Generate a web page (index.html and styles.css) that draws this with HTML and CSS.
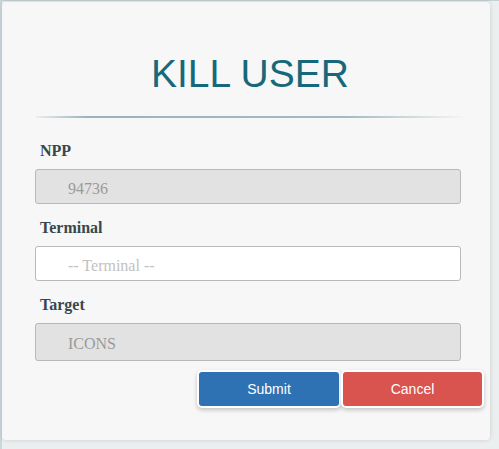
FILE: index.html
```html
<!DOCTYPE html>
<html>
<head>
<meta charset="utf-8">
<link rel="stylesheet" href="styles.css">
</head>
<body>
<div class="page">
  <div class="card">
    <h1 class="title">KILL USER</h1>
    <div class="rule"></div>
    <form class="form">
      <label class="label">NPP</label>
      <input class="input readonly" type="text" value="94736" readonly>
      <label class="label">Terminal</label>
      <input class="input" type="text" placeholder="-- Terminal --">
      <label class="label">Target</label>
      <input class="input readonly tall" type="text" value="ICONS" readonly>
      <div class="actions">
        <button type="button" class="btn btn-submit">Submit</button>
        <button type="button" class="btn btn-cancel">Cancel</button>
      </div>
    </form>
  </div>
</div>
</body>
</html>
```
FILE: styles.css
```css
html, body {
  margin: 0;
  padding: 0;
}
body {
  background: #eceff0;
  font-family: "Liberation Serif", serif;
}
.page {
  height: 449px;
  box-sizing: border-box;
  border-left: 2px solid #cbd8db;
  border-top: 1px solid #c3cfd2;
  padding: 1px 9px 9px 0;
}
.card {
  height: 100%;
  box-sizing: border-box;
  background: #f7f7f7;
  border-radius: 4px;
  box-shadow: 0 0 5px rgba(0, 0, 0, 0.14);
  padding: 49px 29px 0 33px;
}
.title {
  margin: 0;
  padding-left: 4px;
  font: normal 39px/45px "Liberation Sans", Arial, sans-serif;
  color: #16687a;
  text-align: center;
}
.rule {
  margin: 20px -6px 0 1px;
  height: 2px;
  background: linear-gradient(to right, rgba(155, 180, 187, 0.15) 0%, #9ab3ba 12%, #a3bac0 72%, rgba(163, 186, 192, 0) 100%);
}
.form {
  display: block;
  margin: 23px 0 0 0;
}
.label {
  display: block;
  margin: 0 0 8px 5px;
  font: bold 16px/20px "Liberation Serif", serif;
  color: #37484d;
}
.input {
  display: block;
  width: 100%;
  height: 35px;
  box-sizing: border-box;
  margin: 0 0 14px 0;
  padding: 4px 0 0 32px;
  border: 1px solid #b9b9b9;
  border-radius: 3px;
  background: #ffffff;
  font: 16px "Liberation Serif", serif;
  color: #999999;
  outline: none;
}
.input::placeholder {
  color: #c2c2c2;
}
.readonly {
  background: #e2e2e2;
  color: #9a9a9a;
}
.tall {
  height: 38px;
  margin-bottom: 0;
}
.actions {
  display: flex;
  justify-content: flex-end;
  margin: 9px -23px 0 0;
}
.btn {
  height: 38px;
  box-sizing: border-box;
  border: 2px solid #ffffff;
  border-radius: 5px;
  box-shadow: 0 2px 4px rgba(0, 0, 0, 0.22);
  font: 14px "Liberation Sans", Arial, sans-serif;
  color: #ffffff;
  padding: 0;
  cursor: pointer;
}
.btn-submit {
  width: 144px;
  background: #2f72b3;
}
.btn-cancel {
  width: 143px;
  background: #d9534f;
}
```
